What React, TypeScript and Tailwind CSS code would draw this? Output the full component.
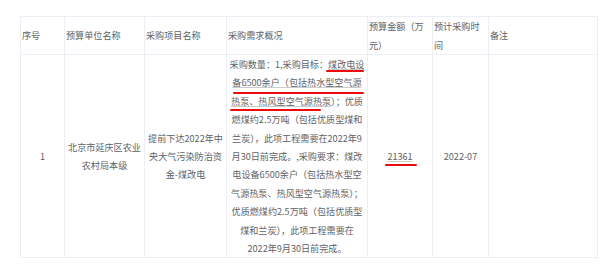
import React from 'react';

const lines = [
  '采购数量：1,采购目标：煤改电设',
  '备6500余户（包括热水型空气源',
  '热泵、热风型空气源热泵）；优质',
  '燃煤约2.5万吨（包括优质型煤和',
  '兰炭），此项工程需要在2022年9',
  '月30日前完成。,采购要求：煤改',
  '电设备6500余户（包括热水型空',
  '气源热泵、热风型空气源热泵）；',
  '优质燃煤约2.5万吨（包括优质型',
  '煤和兰炭），此项工程需要在',
  '2022年9月30日前完成。',
];

const th = 'border border-[#ebeef5] text-left align-middle font-normal pl-[1px] leading-[18.4px]';
const td = 'border border-[#ebeef5] text-center align-middle p-0 leading-[18.4px]';

export default function App() {
  return (
    <div
      className="w-[602px] h-[270px] bg-white pt-[16px] pl-[20px] text-[#606266] text-[9.1px]"
      style={{ fontFamily: '"Noto Sans CJK SC", "Noto Sans", sans-serif' }}
    >
      <table className="table-fixed border-collapse w-[577px]">
        <colgroup>
          <col className="w-[44px]" />
          <col className="w-[80px]" />
          <col className="w-[82px]" />
          <col className="w-[141px]" />
          <col className="w-[65px]" />
          <col className="w-[56px]" />
          <col className="w-[109px]" />
        </colgroup>
        <thead>
          <tr className="h-[38px]">
            <th className={th}>序号</th>
            <th className={th}>预算单位名称</th>
            <th className={th}>采购项目名称</th>
            <th className={th}>采购需求概况</th>
            <th className={th}>预算金额（万<br />元）</th>
            <th className={th}>预计采购时<br />间</th>
            <th className={th}>备注</th>
          </tr>
        </thead>
        <tbody>
          <tr className="h-[202px]">
            <td className={td}>1</td>
            <td className={td}>
              <div>北京市延庆区农业</div>
              <div>农村局本级</div>
            </td>
            <td className={td}>
              <div className="whitespace-nowrap">提前下达2022年中</div>
              <div>央大气污染防治资</div>
              <div>金-煤改电</div>
            </td>
            <td className={td}>
              <div className="relative">
                {lines.map((l, i) => (
                  <div key={i} className="whitespace-nowrap">
                    {i === 0 ? (
                      <>采购数量：1,采购目标：<span className="underline decoration-[#c8cbd0]">煤改电设</span></>
                    ) : i === 1 ? (
                      <span className="underline decoration-[#c8cbd0]">{l}</span>
                    ) : i === 2 ? (
                      <><span className="underline decoration-[#c8cbd0]">热泵、热风型空气源热泵</span>）；优质</>
                    ) : (
                      l
                    )}
                  </div>
                ))}
                {/* red marker lines */}
                <div className="absolute left-[99px] top-[15px] w-[38px] h-[2px] bg-[#ee0a0a] rounded-full" />
                <div className="absolute left-[6px] top-[37px] w-[131px] h-[2px] bg-[#ee0a0a] rounded-full" />
                <div className="absolute left-[3px] top-[54px] w-[91px] h-[2px] bg-[#ee0a0a] rounded-full" />
              </div>
            </td>
            <td className={td}>
              <span className="relative inline-block underline decoration-[#c8cbd0]">
                21361
                <span className="absolute left-[-2px] top-[17px] w-[32px] h-[2px] bg-[#ee0a0a] rounded-full" />
              </span>
            </td>
            <td className={td}>2022-07</td>
            <td className={td}></td>
          </tr>
        </tbody>
      </table>
    </div>
  );
}
